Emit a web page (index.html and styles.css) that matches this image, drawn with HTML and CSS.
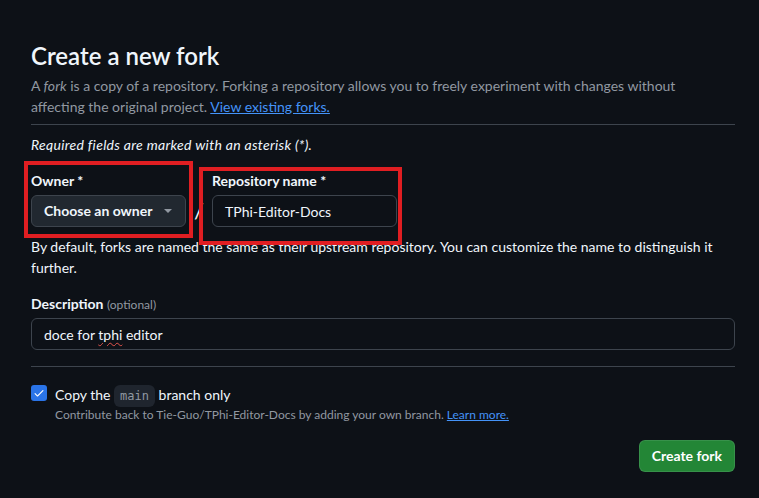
FILE: index.html
```html
<!DOCTYPE html>
<html lang="en">
<head>
<meta charset="utf-8">
<title>Create a new fork</title>
<link rel="stylesheet" href="styles.css">
</head>
<body>
<main class="page">
  <h1 class="title">Create a new fork</h1>
  <p class="lead">A <em>fork</em> is a copy of a repository. Forking a repository allows you to freely experiment with changes without affecting the original project. <a href="#" class="link">View existing forks.</a></p>
  <hr class="divider">
  <p class="required">Required fields are marked with an asterisk (*).</p>
  <div class="name-row">
    <div class="field field-owner">
      <label class="label">Owner *</label>
      <button class="select" type="button"><span>Choose an owner</span> <span class="caret"></span></button>
      <span class="annot annot-owner"></span>
    </div>
    <span class="slash">/</span>
    <div class="field field-repo">
      <label class="label">Repository name *</label>
      <div class="input input-repo"><span>TPhi-Editor-Docs</span></div>
      <span class="annot annot-repo"></span>
    </div>
  </div>
  <p class="hint">By default, forks are named the same as their upstream repository. You can customize the name to distinguish it further.</p>
  <div class="field field-desc">
    <label class="label">Description <span class="optional">(optional)</span></label>
    <div class="input input-desc"><span>doce for <span class="misspelled">tphi</span> editor</span></div>
  </div>
  <hr class="divider divider-2">
  <div class="check-row">
    <span class="checkbox">
      <svg viewBox="0 0 16 16" width="12" height="12"><path d="M13.78 4.22a.75.75 0 0 1 0 1.06l-7.25 7.25a.75.75 0 0 1-1.06 0L2.22 9.28a.75.75 0 0 1 1.06-1.06L6 10.94l6.72-6.72a.75.75 0 0 1 1.06 0Z" fill="#ffffff"/></svg>
    </span>
    <div class="check-text">
      <div class="check-label">Copy the <code class="chip">main</code> branch only</div>
      <div class="caption">Contribute back to Tie-Guo/TPhi-Editor-Docs by adding your own branch. <a href="#" class="link">Learn more.</a></div>
    </div>
  </div>
  <div class="actions">
    <button class="btn-primary" type="button">Create fork</button>
  </div>
</main>
</body>
</html>
```

FILE: styles.css
```css
* { box-sizing: border-box; }
html, body {
  margin: 0;
  padding: 0;
  background: #0d1117;
}
body {
  font-family: Lato, "Noto Sans", "Liberation Sans", sans-serif;
  font-size: 14px;
  line-height: 21px;
  color: #e6edf3;
}
.page {
  width: 704px;
  margin-left: 31px;
  padding-top: 41px;
}
.title {
  margin: 0;
  font-size: 24px;
  line-height: 30px;
  font-weight: 600;
  color: #f0f6fc;
}
.lead {
  margin: 4px 0 0;
  padding-right: 10px;
  color: #9198a1;
}
.link {
  color: #4493f8;
  text-decoration: underline;
}
.divider {
  border: 0;
  border-top: 1px solid #3d444d;
  margin: 7px 0 0;
  height: 0;
}
.required {
  margin: 9px 0 0;
  font-style: italic;
  letter-spacing: 0.3px;
  color: #f0f6fc;
}
.name-row {
  display: flex;
  align-items: flex-end;
  margin-top: 16px;
}
.field {
  position: relative;
  display: flex;
  flex-direction: column;
  gap: 4px;
}
.label {
  display: block;
  height: 20px;
  font-weight: 700;
  line-height: 20px;
  color: #f0f6fc;
}
.select {
  display: flex;
  align-items: center;
  height: 32px;
  width: 155px;
  padding: 0 12px;
  background: #212830;
  border: 1px solid #3d444d;
  border-radius: 6px;
  color: #f0f6fc;
  font: 700 14px/20px Lato, "Noto Sans", sans-serif;
}
.caret {
  margin-left: auto;
  margin-right: 1px;
  width: 0;
  height: 0;
  border-left: 4px solid transparent;
  border-right: 4px solid transparent;
  border-top: 4px solid #9198a1;
}
.slash {
  font-size: 22px;
  line-height: 32px;
  width: 26px;
  text-align: center;
  color: #f0f6fc;
}
.input {
  height: 32px;
  display: flex;
  align-items: center;
  padding: 0 12px;
  background: #0d1117;
  border: 1px solid #3d444d;
  border-radius: 6px;
  color: #f0f6fc;
}
.input-repo { width: 185px; }
.input-desc { width: 704px; }
.misspelled {
  text-decoration: underline wavy #e5534b;
  text-decoration-thickness: 1px;
  text-underline-offset: 2px;
}
.annot {
  position: absolute;
  border: 4px solid #e01e22;
  pointer-events: none;
}
.annot-owner { left: -7px; top: -10px; right: -7px; bottom: -11px; }
.annot-repo { left: -13px; top: -4px; right: -5px; bottom: -18px; }
.hint {
  margin: 9px 0 0;
  color: #f0f6fc;
}
.field-desc { margin-top: 16px; }
.optional {
  font-size: 12px;
  line-height: 1;
  font-weight: 400;
  color: #9198a1;
}
.divider-2 { margin-top: 16px; }
.check-row {
  display: flex;
  gap: 8px;
  margin-top: 17px;
}
.checkbox {
  flex: none;
  width: 16px;
  height: 16px;
  margin-top: 1px;
  border-radius: 3px;
  background: #2a74e8;
  display: flex;
  align-items: center;
  justify-content: center;
}
.check-label {
  height: 21px;
  line-height: 21px;
  color: #f0f6fc;
}
.chip {
  font-family: "DejaVu Sans Mono", "Liberation Mono", monospace;
  font-size: 12px;
  line-height: 1;
  padding: 4px 6px;
  border-radius: 6px;
  background: #1f252e;
  color: #9198a1;
}
.caption {
  font-size: 12px;
  line-height: 18px;
  color: #9198a1;
  margin-top: 1px;
}
.actions {
  display: flex;
  justify-content: flex-end;
  margin-top: 16px;
}
.btn-primary {
  height: 32px;
  padding: 0 12px;
  background: #238636;
  border: 1px solid rgba(240,246,252,0.1);
  border-radius: 6px;
  color: #ffffff;
  font: 700 14px/20px Lato, "Noto Sans", sans-serif;
}
```
